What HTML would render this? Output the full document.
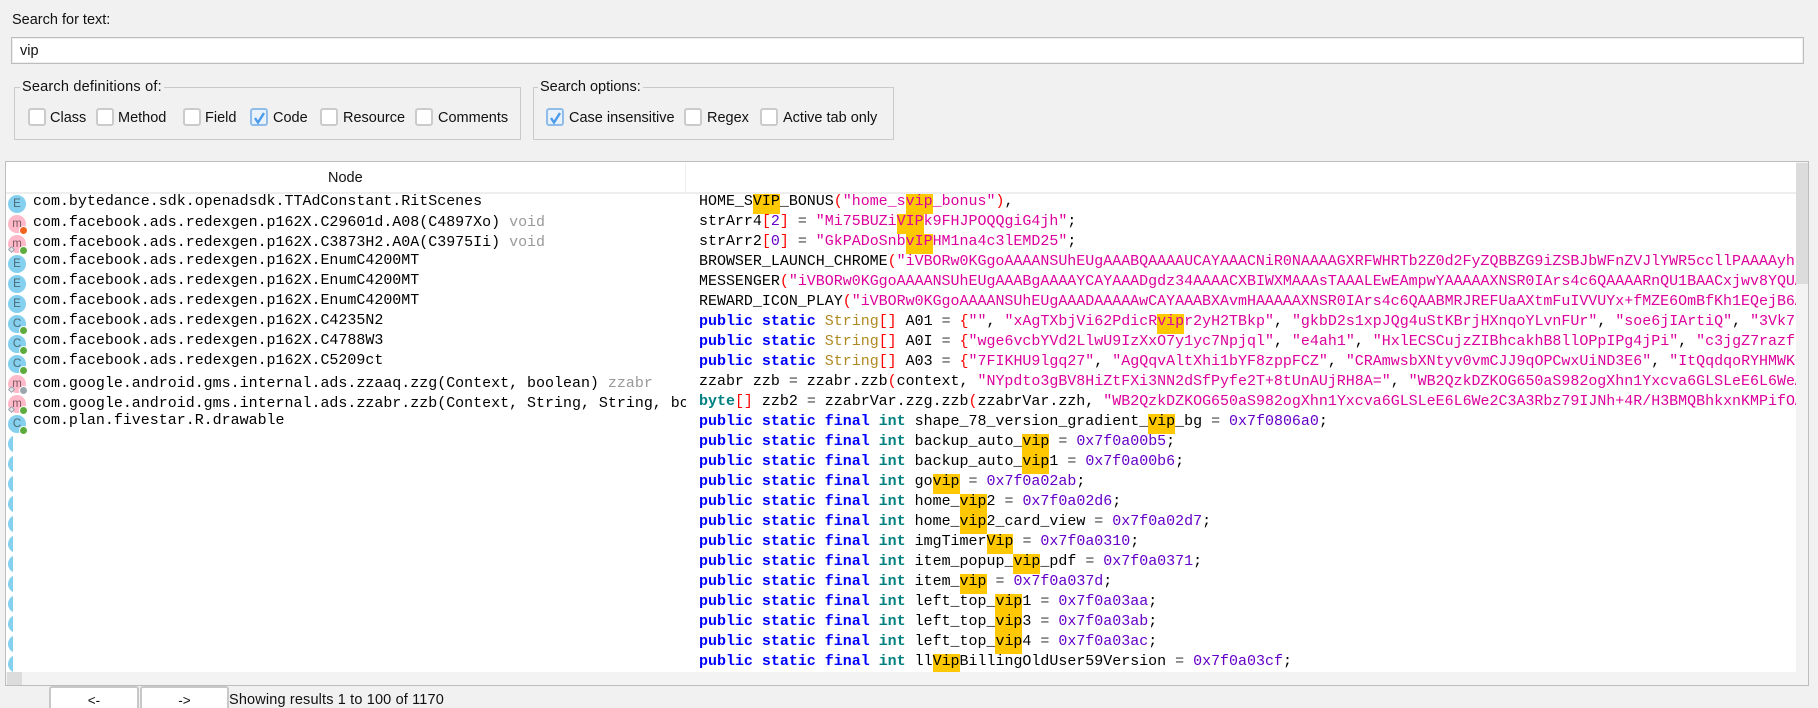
<!DOCTYPE html>
<html><head><meta charset="utf-8"><style>
html,body{margin:0;padding:0;width:1818px;height:708px;overflow:hidden;background:#f1f1f1}
body{font-family:"Liberation Sans",sans-serif;font-size:14.5px;color:#111;position:relative}
.a{position:absolute;white-space:nowrap}
.inp{left:11px;top:37px;width:1791px;height:25px;border:1px solid #bdbdbd;background:#fff;box-shadow:inset 0 0 0 1px #eee}
.grp{border:1px solid #cacaca;box-sizing:border-box;top:87px;height:53px}
.tt{top:78px;background:#f1f1f1;padding:0 2px;line-height:18px}
.cb{top:108px;width:18px;height:18px;box-sizing:border-box;border:2px solid #cbcbcb;border-radius:3px;background:#fff}
.cb.on{border-color:#8fbce9;background:#e9f2fb}
.cb svg{position:absolute;left:-2px;top:-2px}
.lb{top:109px;line-height:18px}
.tbl{left:5px;top:161px;width:1804px;height:525px;box-sizing:border-box;border:1px solid #bdbdbd;background:#fff}
.hd{left:6px;top:163px;width:1790px;height:29px;background:#fff;border-bottom:2px solid #eee}
.cl{overflow:hidden;top:194px;height:478px}
.m{font-family:"Liberation Mono",monospace;font-size:14.97px;color:#000}
.r{position:absolute;left:0;height:20px;line-height:16px;white-space:pre}
.l{position:absolute;left:28px;line-height:20px;margin-top:1px;white-space:pre}
.g{color:#999}
.h{display:inline-block;height:20px;background:#ffc800;vertical-align:top;line-height:16px}
.k{color:#0000ff;font-weight:bold}.t{color:#008080;font-weight:bold}.s{color:#dc009c}.n{color:#6400c8}.p{color:#f00}.o{color:#444}.c{color:#b08a20}
.i{position:absolute;left:3px;width:18px;height:18px;border-radius:50%;text-align:center;font:11.5px/18px "Liberation Sans",sans-serif}
.E{background:#84d0ee;color:#4c6a78}.P{background:#ffb9c9;color:#7d5a62}
.d{position:absolute;left:11.5px;top:11.5px;width:7px;height:7px;border-radius:50%;box-shadow:0 0 0 1px #fff}
.gr{background:#5cab3c}.or{background:#f0641e}.gy{background:#9aa5ae}
.q{position:absolute;left:.5px;top:11.5px;width:3px;height:3px;border:1px solid #9aa4ae;transform:rotate(45deg);background:#e4e6e8}
.btn{top:686px;height:30px;box-sizing:border-box;border:2px solid #c8c8c8;border-radius:3px 3px 0 0;background:#fff;text-align:center;line-height:25px;font-size:13.5px}
</style></head><body>
<div class="a" style="left:12px;top:11px;line-height:18px">Search for text:</div>
<div class="a inp"></div>
<div class="a" style="left:20px;top:42px;line-height:18px">vip</div>

<div class="a grp" style="left:14px;width:507px"></div>
<div class="a tt" style="left:20px;letter-spacing:.2px">Search definitions of:</div>
<div class="a grp" style="left:533px;width:361px"></div>
<div class="a tt" style="left:538px">Search options:</div>

<div class="a cb" style="left:28px"></div><div class="a lb" style="left:50px">Class</div>
<div class="a cb" style="left:96px"></div><div class="a lb" style="left:118px">Method</div>
<div class="a cb" style="left:183px"></div><div class="a lb" style="left:205px">Field</div>
<div class="a cb on" style="left:250px"><svg width="18" height="18" viewBox="0 0 18 18"><path d="M5 10 L8 14.5 L14 5" fill="none" stroke="#4a9be8" stroke-width="2.4"/></svg></div><div class="a lb" style="left:273px">Code</div>
<div class="a cb" style="left:320px"></div><div class="a lb" style="left:343px">Resource</div>
<div class="a cb" style="left:415px"></div><div class="a lb" style="left:438px">Comments</div>
<div class="a cb on" style="left:546px"><svg width="18" height="18" viewBox="0 0 18 18"><path d="M5 10 L8 14.5 L14 5" fill="none" stroke="#4a9be8" stroke-width="2.4"/></svg></div><div class="a lb" style="left:569px">Case insensitive</div>
<div class="a cb" style="left:684px"></div><div class="a lb" style="left:707px">Regex</div>
<div class="a cb" style="left:760px"></div><div class="a lb" style="left:783px">Active tab only</div>

<div class="a tbl"></div>
<div class="a hd"></div>
<div class="a" style="left:685px;top:163px;width:1px;height:29px;background:#eee"></div>
<div class="a" style="left:328px;top:169px;line-height:18px">Node</div>

<div class="a cl m" style="left:5px;width:681px">
<div class="i E" style="top:1px">E</div>
<div class="i P" style="top:21px">m<div class="d or"></div></div>
<div class="i P" style="top:41px">m<div class="q"></div><div class="d gr"></div></div>
<div class="i E" style="top:61px">E</div>
<div class="i E" style="top:81px">E</div>
<div class="i E" style="top:101px">E</div>
<div class="i E" style="top:121px">C<div class="d gr"></div></div>
<div class="i E" style="top:141px">C<div class="d gr"></div></div>
<div class="i E" style="top:161px">C<div class="d gr"></div></div>
<div class="i P" style="top:181px">m<div class="q"></div><div class="d gy"></div></div>
<div class="i P" style="top:201px">m<div class="q"></div><div class="d gr"></div></div>
<div class="i E" style="top:221px">C<div class="d gr"></div></div>
<div class="l" style="top:-3px">com.bytedance.sdk.openadsdk.TTAdConstant.RitScenes</div>
<div class="l" style="top:18px">com.facebook.ads.redexgen.p162X.C29601d.A08(C4897Xo) <span class="g">void</span></div>
<div class="l" style="top:38px">com.facebook.ads.redexgen.p162X.C3873H2.A0A(C3975Ii) <span class="g">void</span></div>
<div class="l" style="top:56px">com.facebook.ads.redexgen.p162X.EnumC4200MT</div>
<div class="l" style="top:76px">com.facebook.ads.redexgen.p162X.EnumC4200MT</div>
<div class="l" style="top:96px">com.facebook.ads.redexgen.p162X.EnumC4200MT</div>
<div class="l" style="top:116px">com.facebook.ads.redexgen.p162X.C4235N2</div>
<div class="l" style="top:136px">com.facebook.ads.redexgen.p162X.C4788W3</div>
<div class="l" style="top:156px">com.facebook.ads.redexgen.p162X.C5209ct</div>
<div class="l" style="top:179px">com.google.android.gms.internal.ads.zzaaq.zzg(Context, boolean) <span class="g">zzabr</span></div>
<div class="l" style="top:199px">com.google.android.gms.internal.ads.zzabr.zzb(Context, String, String, boolean)</div>
<div class="l" style="top:216px">com.plan.fivestar.R.drawable</div>
</div>
<div class="a cl" style="left:8px;width:5px">
<div class="i E" style="left:0;top:241px"></div><div class="i E" style="left:0;top:261px"></div><div class="i E" style="left:0;top:281px"></div><div class="i E" style="left:0;top:301px"></div><div class="i E" style="left:0;top:321px"></div><div class="i E" style="left:0;top:341px"></div><div class="i E" style="left:0;top:361px"></div><div class="i E" style="left:0;top:381px"></div><div class="i E" style="left:0;top:401px"></div><div class="i E" style="left:0;top:421px"></div><div class="i E" style="left:0;top:441px"></div><div class="i E" style="left:0;top:461px"></div>
</div>

<div class="a cl m" style="left:699px;width:1097px">
<div class="r" style="top:0">HOME_S<span class="h">VIP</span>_BONUS<span class="p">(</span><span class="s">"home_s<span class="h">vip</span>_bonus"</span><span class="p">)</span>,</div>
<div class="r" style="top:20px">strArr4<span class="p">[</span><span class="n">2</span><span class="p">]</span> <span class="o">=</span> <span class="s">"Mi75BUZi<span class="h">VIP</span>k9FHJPOQQgiG4jh"</span>;</div>
<div class="r" style="top:40px">strArr2<span class="p">[</span><span class="n">0</span><span class="p">]</span> <span class="o">=</span> <span class="s">"GkPADoSnb<span class="h">vIP</span>HM1na4c3lEMD25"</span>;</div>
<div class="r" style="top:60px">BROWSER_LAUNCH_CHROME<span class="p">(</span><span class="s">"iVBORw0KGgoAAAANSUhEUgAAABQAAAAUCAYAAACNiR0NAAAAGXRFWHRTb2Z0d2FyZQBBZG9iZSBJbWFnZVJlYWR5ccllPAAAAyh</span></div>
<div class="r" style="top:80px">MESSENGER<span class="p">(</span><span class="s">"iVBORw0KGgoAAAANSUhEUgAAABgAAAAYCAYAAADgdz34AAAACXBIWXMAAAsTAAALEwEAmpwYAAAAAXNSR0IArs4c6QAAAARnQU1BAACxjwv8YQUAAAA</span></div>
<div class="r" style="top:100px">REWARD_ICON_PLAY<span class="p">(</span><span class="s">"iVBORw0KGgoAAAANSUhEUgAAADAAAAAwCAYAAABXAvmHAAAAAXNSR0IArs4c6QAABMRJREFUaAXtmFuIVVUYx+fMZE6OmBfKh1EQejB6AAAA</span></div>
<div class="r" style="top:120px"><span class="k">public</span> <span class="k">static</span> <span class="c">String</span><span class="p">[]</span> A01 <span class="o">=</span> <span class="p">{</span><span class="s">""</span>, <span class="s">"xAgTXbjVi62PdicR<span class="h">vip</span>r2yH2TBkp"</span>, <span class="s">"gkbD2s1xpJQg4uStKBrjHXnqoYLvnFUr"</span>, <span class="s">"soe6jIArtiQ"</span>, <span class="s">"3Vk7uAAAAAAA"</span></div>
<div class="r" style="top:140px"><span class="k">public</span> <span class="k">static</span> <span class="c">String</span><span class="p">[]</span> A0I <span class="o">=</span> <span class="p">{</span><span class="s">"wge6vcbYVd2LlwU9IzXxO7y1yc7Npjql"</span>, <span class="s">"e4ah1"</span>, <span class="s">"HxlECSCujzZIBhcakhB8llOPpIPg4jPi"</span>, <span class="s">"c3jgZ7razfuAAAAAA"</span></div>
<div class="r" style="top:160px"><span class="k">public</span> <span class="k">static</span> <span class="c">String</span><span class="p">[]</span> A03 <span class="o">=</span> <span class="p">{</span><span class="s">"7FIKHU9lgq27"</span>, <span class="s">"AgQqvAltXhi1bYF8zppFCZ"</span>, <span class="s">"CRAmwsbXNtyv0vmCJJ9qOPCwxUiND3E6"</span>, <span class="s">"ItQqdqoRYHMWKGAAAAA"</span></div>
<div class="r" style="top:180px">zzabr zzb <span class="o">=</span> zzabr.zzb<span class="p">(</span>context, <span class="s">"NYpdto3gBV8HiZtFXi3NN2dSfPyfe2T+8tUnAUjRH8A="</span>, <span class="s">"WB2QzkDZKOG650aS982ogXhn1Yxcva6GLSLeE6L6WeAAAA</span></div>
<div class="r" style="top:200px"><span class="t">byte</span><span class="p">[]</span> zzb2 <span class="o">=</span> zzabrVar.zzg.zzb<span class="p">(</span>zzabrVar.zzh, <span class="s">"WB2QzkDZKOG650aS982ogXhn1Yxcva6GLSLeE6L6We2C3A3Rbz79IJNh+4R/H3BMQBhkxnKMPifOAAAA</span></div>
<div class="r" style="top:220px"><span class="k">public</span> <span class="k">static</span> <span class="k">final</span> <span class="t">int</span> shape_78_version_gradient_<span class="h">vip</span>_bg <span class="o">=</span> <span class="n">0x7f0806a0</span>;</div>
<div class="r" style="top:240px"><span class="k">public</span> <span class="k">static</span> <span class="k">final</span> <span class="t">int</span> backup_auto_<span class="h">vip</span> <span class="o">=</span> <span class="n">0x7f0a00b5</span>;</div>
<div class="r" style="top:260px"><span class="k">public</span> <span class="k">static</span> <span class="k">final</span> <span class="t">int</span> backup_auto_<span class="h">vip</span>1 <span class="o">=</span> <span class="n">0x7f0a00b6</span>;</div>
<div class="r" style="top:280px"><span class="k">public</span> <span class="k">static</span> <span class="k">final</span> <span class="t">int</span> go<span class="h">vip</span> <span class="o">=</span> <span class="n">0x7f0a02ab</span>;</div>
<div class="r" style="top:300px"><span class="k">public</span> <span class="k">static</span> <span class="k">final</span> <span class="t">int</span> home_<span class="h">vip</span>2 <span class="o">=</span> <span class="n">0x7f0a02d6</span>;</div>
<div class="r" style="top:320px"><span class="k">public</span> <span class="k">static</span> <span class="k">final</span> <span class="t">int</span> home_<span class="h">vip</span>2_card_view <span class="o">=</span> <span class="n">0x7f0a02d7</span>;</div>
<div class="r" style="top:340px"><span class="k">public</span> <span class="k">static</span> <span class="k">final</span> <span class="t">int</span> imgTimer<span class="h">Vip</span> <span class="o">=</span> <span class="n">0x7f0a0310</span>;</div>
<div class="r" style="top:360px"><span class="k">public</span> <span class="k">static</span> <span class="k">final</span> <span class="t">int</span> item_popup_<span class="h">vip</span>_pdf <span class="o">=</span> <span class="n">0x7f0a0371</span>;</div>
<div class="r" style="top:380px"><span class="k">public</span> <span class="k">static</span> <span class="k">final</span> <span class="t">int</span> item_<span class="h">vip</span> <span class="o">=</span> <span class="n">0x7f0a037d</span>;</div>
<div class="r" style="top:400px"><span class="k">public</span> <span class="k">static</span> <span class="k">final</span> <span class="t">int</span> left_top_<span class="h">vip</span>1 <span class="o">=</span> <span class="n">0x7f0a03aa</span>;</div>
<div class="r" style="top:420px"><span class="k">public</span> <span class="k">static</span> <span class="k">final</span> <span class="t">int</span> left_top_<span class="h">vip</span>3 <span class="o">=</span> <span class="n">0x7f0a03ab</span>;</div>
<div class="r" style="top:440px"><span class="k">public</span> <span class="k">static</span> <span class="k">final</span> <span class="t">int</span> left_top_<span class="h">vip</span>4 <span class="o">=</span> <span class="n">0x7f0a03ac</span>;</div>
<div class="r" style="top:460px"><span class="k">public</span> <span class="k">static</span> <span class="k">final</span> <span class="t">int</span> ll<span class="h">Vip</span>BillingOldUser59Version <span class="o">=</span> <span class="n">0x7f0a03cf</span>;</div>
</div>

<div class="a" style="left:1796px;top:162px;width:12px;height:510px;background:#f3f3f3"></div>
<div class="a" style="left:1796px;top:163px;width:12px;height:121px;background:#dcdcdc"></div>
<div class="a" style="left:6px;top:672px;width:1802px;height:13px;background:#f3f3f3"></div>
<div class="a" style="left:7px;top:672px;width:15px;height:13px;background:#dcdcdc"></div>

<div class="a btn" style="left:49px;width:90px">&lt;-</div>
<div class="a btn" style="left:140px;width:89px">-&gt;</div>
<div class="a" style="left:229px;top:691px;line-height:18px;letter-spacing:.15px">Showing results 1 to 100 of 1170</div>
</body></html>
